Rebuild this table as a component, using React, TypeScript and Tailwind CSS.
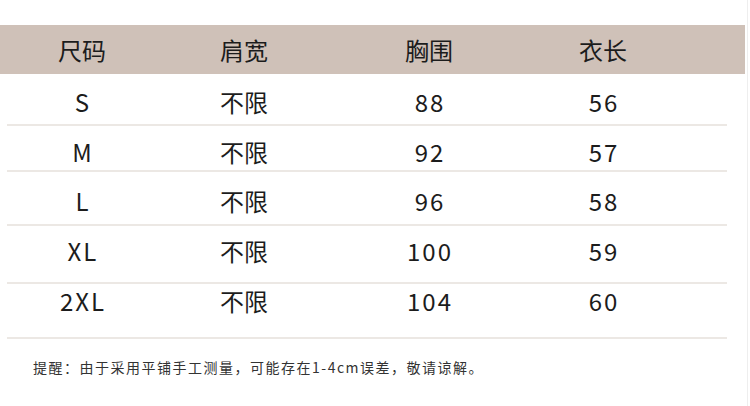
import React from "react";

interface SizeRow {
    size: string;
    shoulder: string;
    chest: string;
    length: string;
    h: string;
    pt: string;
}

const rows: SizeRow[] = [
    { size: "S", shoulder: "不限", chest: "88", length: "56", h: "h-[50px]", pt: "pt-[16px]" },
    { size: "M", shoulder: "不限", chest: "92", length: "57", h: "h-[44px]", pt: "pt-[14px]" },
    { size: "L", shoulder: "不限", chest: "96", length: "58", h: "h-[52px]", pt: "pt-[17px]" },
    { size: "XL", shoulder: "不限", chest: "100", length: "59", h: "h-[56px]", pt: "pt-[13px]" },
    { size: "2XL", shoulder: "不限", chest: "104", length: "60", h: "h-[53px]", pt: "pt-[5px]" },
];

const cols = "grid grid-cols-[164px_160px_210px_138px]";
// latin cells are a touch wider-set in the reference
const num = "text-center tracking-[2px] pl-[2px]";

const App: React.FC = () => {
    return (
        <div
            className="w-[750px] h-[406px] bg-white overflow-hidden"
            style={{ fontFamily: '"Noto Sans CJK SC", "Noto Sans", sans-serif' }}
        >
            <div className="w-[748px] h-full border-r border-[#eeeeee] pt-[25px]">
                {/* header */}
                <div className={`${cols} w-[745px] h-[49px] items-center bg-[#cfc1b8] text-[24px] leading-[24px] text-[#1c1c1c]`}>
                    <div className="text-center">尺码</div>
                    <div className="text-center">肩宽</div>
                    <div className="text-center">胸围</div>
                    <div className="text-center">衣长</div>
                </div>

                {rows.map((r) => (
                    <div key={r.size}>
                        <div className={`${cols} ${r.h} ${r.pt} text-[24px] leading-[24px] text-[#1c1c1c]`}>
                            <div className={num}>{r.size}</div>
                            <div className="text-center">{r.shoulder}</div>
                            <div className={num}>{r.chest}</div>
                            <div className={num}>{r.length}</div>
                        </div>
                        <div className="ml-[7px] w-[720px] h-[2px] bg-[#ece8e4]" />
                    </div>
                ))}

                <p className="pl-[33px] pt-[21px] text-[14px] leading-[14px] tracking-[1.5px] text-[#333333]">
                    提醒：由于采用平铺手工测量，可能存在1-4cm误差，敬请谅解。
                </p>
            </div>
        </div>
    );
};

export default App;
